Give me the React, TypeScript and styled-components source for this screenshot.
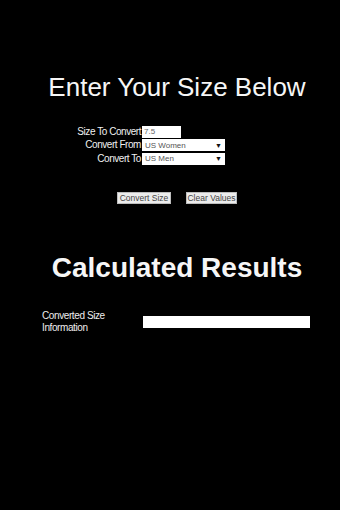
import React from 'react';
import styled, { createGlobalStyle } from 'styled-components';

const GlobalStyle = createGlobalStyle`
  html, body {
    margin: 0;
    padding: 0;
    background: #000;
  }
  body {
    font-family: 'Liberation Sans', Arial, sans-serif;
    color: #f4f4f4;
  }
`;

const Page = styled.div`
  width: 340px;
  min-height: 510px;
  box-sizing: border-box;
  padding: 72px 0 0 14px;
  display: flex;
  flex-direction: column;
  align-items: center;
  background: #000;
`;

const Heading = styled.h1<{ $bold?: boolean; $size: number }>`
  margin: 0;
  font-size: ${(p) => p.$size}px;
  line-height: ${(p) => p.$size + 4}px;
  font-weight: ${(p) => (p.$bold ? 700 : 400)};
  color: #f6f6f6;
  white-space: nowrap;
`;

const FormGrid = styled.div`
  align-self: flex-start;
  margin-top: 23px;
  margin-left: 56px;
  display: grid;
  grid-template-columns: 72px 83px;
  grid-auto-rows: 13.5px;
  align-items: center;
  justify-items: start;
`;

const Label = styled.label`
  justify-self: end;
  padding-right: 1px;
  font-size: 10px;
  line-height: 12px;
  letter-spacing: -0.45px;
  color: #f0f0f0;
  white-space: nowrap;
`;

const TextInput = styled.input`
  box-sizing: border-box;
  width: 39px;
  height: 12px;
  margin: 0;
  padding: 0 2px;
  border: none;
  background: #fff;
  font-family: 'Liberation Sans', Arial, sans-serif;
  font-size: 8px;
  color: #666;
  outline: none;
`;

const SelectBox = styled.div`
  box-sizing: border-box;
  width: 83px;
  height: 12px;
  padding: 0 3px 0 3px;
  display: flex;
  align-items: center;
  justify-content: space-between;
  background: #fff;
  font-size: 8px;
  color: #555;
`;

const Arrow = styled.span`
  font-size: 7px;
  color: #111;
`;

const ButtonRow = styled.div`
  margin-top: 26px;
  display: flex;
  gap: 15px;
`;

const Button = styled.button<{ $w: number }>`
  box-sizing: border-box;
  width: ${(p) => p.$w}px;
  height: 12px;
  margin: 0;
  padding: 0;
  border: 1px solid #bdbdbd;
  background: #ececec;
  font-family: 'Liberation Sans', Arial, sans-serif;
  font-size: 8.5px;
  line-height: 10px;
  color: #444;
`;

const ResultsTitleWrap = styled.div`
  margin-top: 48px;
`;

const ResultRow = styled.div`
  margin-top: 26px;
  margin-left: -14px;
  width: 340px;
  box-sizing: border-box;
  padding-left: 42px;
  display: flex;
  align-items: center;
`;

const ResultLabel = styled.div`
  width: 101px;
  font-size: 10px;
  line-height: 12px;
  letter-spacing: -0.4px;
  color: #eee;
`;

const ResultBar = styled.div`
  width: 167px;
  height: 12px;
  background: #fff;
`;

export default function App() {
  return (
    <>
      <GlobalStyle />
      <Page>
        <Heading $size={26}>Enter Your Size Below</Heading>
        <FormGrid>
          <Label>Size To Convert</Label>
          <TextInput value="7.5" readOnly />
          <Label>Convert From</Label>
          <SelectBox>
            <span>US Women</span>
            <Arrow>▼</Arrow>
          </SelectBox>
          <Label>Convert To</Label>
          <SelectBox>
            <span>US Men</span>
            <Arrow>▼</Arrow>
          </SelectBox>
        </FormGrid>
        <ButtonRow>
          <Button $w={54}>Convert Size</Button>
          <Button $w={51}>Clear Values</Button>
        </ButtonRow>
        <ResultsTitleWrap>
          <Heading $bold $size={28}>Calculated Results</Heading>
        </ResultsTitleWrap>
        <ResultRow>
          <ResultLabel>
            Converted Size
            <br />
            Information
          </ResultLabel>
          <ResultBar />
        </ResultRow>
      </Page>
    </>
  );
}
